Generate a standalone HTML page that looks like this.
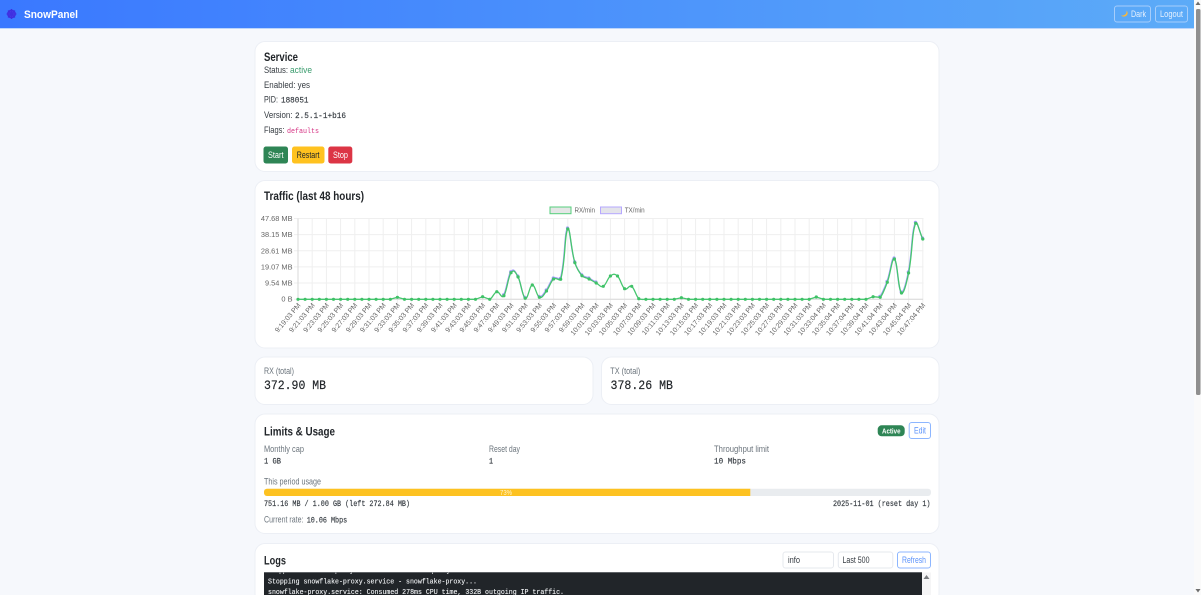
<!DOCTYPE html>
<html lang="en">
<head>
<meta charset="utf-8">
<title>SnowPanel</title>
<style>
html,body{margin:0;padding:0;width:1201px;height:595px;overflow:hidden;background:#f6f8fc}
svg{display:block;position:absolute;left:0;top:0;filter:blur(.3px)}
text{font-family:"Liberation Sans",sans-serif;font-size:9.6px;fill:#343a40}
.m{font-family:"Liberation Mono",monospace;font-size:7.8px;fill:#343a40;stroke:#343a40;stroke-width:.15px}
.h{font-size:12px;font-weight:bold;fill:#212529}
.g{fill:#6c757d;font-size:8.8px}
.c{fill:#666;font-size:7.4px}
.x{fill:#666;font-size:7px;text-anchor:end}
.y{fill:#666;font-size:7.4px;text-anchor:end}
.card{fill:#fff;stroke:#eceff5;stroke-width:1}
.b{font-size:8.8px;fill:#fff}
.l{font-family:"Liberation Mono",monospace;font-size:7.4px;fill:#f1f3f5;stroke:#f1f3f5;stroke-width:.12px}
</style>
</head>
<body>
<svg width="1201" height="595" viewBox="0 0 1201 595" xmlns="http://www.w3.org/2000/svg">
<defs>
<linearGradient id="nav" x1="0" x2="1" y1="0" y2="0"><stop offset="0" stop-color="#3a78ff"/><stop offset="1" stop-color="#5cabf8"/></linearGradient>
<marker id="dg" markerWidth="4" markerHeight="4" refX="2" refY="2" markerUnits="userSpaceOnUse"><circle cx="2" cy="2" r="1.6" fill="#3fc167"/></marker>
<marker id="dp" markerWidth="4" markerHeight="4" refX="2" refY="2" markerUnits="userSpaceOnUse"><circle cx="2" cy="2" r="1.6" fill="#a99bff"/></marker>
<clipPath id="con"><rect x="264" y="572.5" width="658" height="23"/></clipPath>
</defs>

<!-- navbar -->
<rect x="0" y="0" width="1194" height="28" fill="url(#nav)"/>
<rect x="0" y="28" width="1194" height="1" fill="#bcd5fb"/>
<g stroke="#3f2fe0" stroke-width="1.3" fill="#4a38e6">
<circle cx="11.5" cy="14" r="3.8"/>
<path d="M11.5 9v10M6.5 14h10M8 10.500l7 7M15 10.500l-7 7" stroke-width="1.100"/>
</g>
<text x="24" y="18" textLength="54" lengthAdjust="spacingAndGlyphs" style="font-size:10.8px;font-weight:bold;fill:#fff">SnowPanel</text>
<rect x="1114.500" y="6" width="36" height="16" rx="2.500" fill="none" stroke="#a6cdfb"/>
<path d="M1126.500 10.500c.6 3-1.800 5.400-5.500 5 1.800 1.900 5.600 1.300 6.500-1.400.4-1.300 0-2.600-1-3.600z" fill="#f6b73c"/>
<text x="1131" y="17" textLength="15" lengthAdjust="spacingAndGlyphs" class="b" style="fill:#e6f1fe">Dark</text>
<rect x="1155.500" y="6" width="32" height="16" rx="2.500" fill="none" stroke="#a6cdfb"/>
<text x="1160" y="17" textLength="23" lengthAdjust="spacingAndGlyphs" class="b" style="fill:#e6f1fe">Logout</text>

<!-- page scrollbar -->
<rect x="1194" y="0" width="7" height="595" fill="#fafafa"/>
<rect x="1196" y="9" width="4.500" height="386" rx="1.500" fill="#8f8f8f"/>
<path d="M1198 1.500l2.500 3.500h-5zM1198 592.500l2.500-3.500h-5z" fill="#6e6e6e"/>

<!-- service -->
<rect class="card" x="255" y="41.500" width="684" height="130" rx="10"/>
<text class="h" x="264" y="61" textLength="34" lengthAdjust="spacingAndGlyphs">Service</text>
<text x="264" y="72.800" textLength="24" lengthAdjust="spacingAndGlyphs">Status:</text>
<text x="290" y="72.800" textLength="22" lengthAdjust="spacingAndGlyphs" style="fill:#3b9c6e">active</text>
<text x="264" y="87.800" textLength="46" lengthAdjust="spacingAndGlyphs">Enabled: yes</text>
<text x="264" y="102.500" textLength="14" lengthAdjust="spacingAndGlyphs">PID:</text>
<text class="m" x="281" y="102.500" textLength="27.500" lengthAdjust="spacingAndGlyphs">188051</text>
<text x="264" y="118" textLength="28.500" lengthAdjust="spacingAndGlyphs">Version:</text>
<text class="m" x="295" y="118" textLength="51" lengthAdjust="spacingAndGlyphs">2.5.1-1+b16</text>
<text x="264" y="133.200" textLength="20.500" lengthAdjust="spacingAndGlyphs">Flags:</text>
<text class="m" x="287" y="133" textLength="32" lengthAdjust="spacingAndGlyphs" style="fill:#d63384;stroke:none;font-size:7.200px">defaults</text>
<rect x="263.500" y="146.500" width="24.500" height="17" rx="2.500" fill="#2e8555"/>
<text class="b" x="268" y="158" textLength="15.500" lengthAdjust="spacingAndGlyphs">Start</text>
<rect x="292" y="146.500" width="32.500" height="17" rx="2.500" fill="#ffc21f"/>
<text class="b" x="296.800" y="158" textLength="22.700" lengthAdjust="spacingAndGlyphs" style="fill:#212529">Restart</text>
<rect x="328.300" y="146.500" width="24" height="17" rx="2.500" fill="#dc3545"/>
<text class="b" x="333" y="158" textLength="15" lengthAdjust="spacingAndGlyphs">Stop</text>

<!-- traffic -->
<rect class="card" x="255" y="180.500" width="684" height="167.500" rx="10"/>
<text class="h" x="264" y="200" textLength="100" lengthAdjust="spacingAndGlyphs">Traffic (last 48 hours)</text>
<rect x="550" y="207" width="21" height="6.700" fill="#e4e6e6" stroke="#56cf7c" stroke-width="1"/>
<text class="c" x="574.500" y="212.700" textLength="20.500" lengthAdjust="spacingAndGlyphs">RX/min</text>
<rect x="600.500" y="207" width="21" height="6.700" fill="#e4e4ea" stroke="#b6a8ff" stroke-width="1"/>
<text class="c" x="624.700" y="212.700" textLength="20" lengthAdjust="spacingAndGlyphs">TX/min</text>

<g stroke="#efefef" stroke-width="1" fill="none">
<path d="M294 218.500H923.500M294 234.600H923.500M294 250.700H923.500M294 266.900H923.500M294 283H923.500M294 299.300H923.500"/>
<path d="M298 218.500V303M312.200 218.500V303M326.400 218.500V303M340.600 218.500V303M354.800 218.500V303M369 218.500V303M383.200 218.500V303M397.400 218.500V303M411.600 218.500V303M425.800 218.500V303M440 218.500V303M454.200 218.500V303M468.400 218.500V303M482.600 218.500V303M496.800 218.500V303M511 218.500V303M525.200 218.500V303M539.400 218.500V303M553.600 218.500V303M567.800 218.500V303M582 218.500V303M596.200 218.500V303M610.400 218.500V303M624.600 218.500V303M638.800 218.500V303M653 218.500V303M667.200 218.500V303M681.400 218.500V303M695.600 218.500V303M709.800 218.500V303M724 218.500V303M738.200 218.500V303M752.400 218.500V303M766.600 218.500V303M780.800 218.500V303M795 218.500V303M809.200 218.500V303M823.400 218.500V303M837.600 218.500V303M851.800 218.500V303M866 218.500V303M880.200 218.500V303M894.400 218.500V303M908.600 218.500V303M922.800 218.500V303"/>
</g>
<path d="M298 218.500V299.300H923" fill="none" stroke="#d9d9d9"/>
<text class="y" x="292.500" y="221">47.68 MB</text>
<text class="y" x="292.500" y="237">38.15 MB</text>
<text class="y" x="292.500" y="253.300">28.61 MB</text>
<text class="y" x="292.500" y="269.500">19.07 MB</text>
<text class="y" x="292.500" y="285.700">9.54 MB</text>
<text class="y" x="292.500" y="301.700">0 B</text>

<g transform="translate(-.3 -1)" fill="none" stroke="#a99bff" stroke-width="1.300" marker-start="url(#dp)" marker-mid="url(#dp)" marker-end="url(#dp)">
<path d="M503.900 295.700C506.700 291.900 508.200 276.400 511 272.700C513.800 269 515.300 271.900 518.100 277C520.900 282.100 522.400 296.700 525.200 298.300"/>
<path d="M539.400 297.300C542.200 298.500 543.700 294.700 546.500 291C549.300 287.300 550.800 281.300 553.600 279C556.400 276.700 560 281.800 560.700 279.300C565.700 261.600 564.400 233 567.800 229C570.100 226.300 570.900 249.600 574.900 262.700C576.600 268.300 578.300 271.400 582 275.700C584 278 586.300 277.500 589.100 279C591.900 280.500 593.400 281.500 596.200 283"/>
<path d="M880.200 297.300C881.500 296.500 885 288.500 887.300 282.300C890.700 273.200 892 257.200 894.400 259C897.700 261.500 898 289.500 901.500 293C903.700 295.100 906.900 281.300 908.600 273C912.600 253.400 911.500 233.400 915.700 223.300C917.200 219.800 919.900 234 922.800 239"/>
</g>
<path fill="none" stroke="#46c66e" stroke-width="1.300" stroke-linejoin="round" marker-start="url(#dg)" marker-mid="url(#dg)" marker-end="url(#dg)" d="M298 299.300L305.100 299.300L312.200 299.300L319.300 299.300L326.400 299.300L333.500 299.300L340.600 299.300L347.700 299.300L354.800 299.300L361.900 299.300L369 299.300L376.100 299.300L383.200 299.300L390.300 299.300L397.400 297.300L404.500 299.300L411.600 299.300L418.700 299.300L425.800 299.300L432.900 299.300L440 299.300L447.100 299.300L454.200 299.300L461.300 299.300L468.400 299.300L475.500 299.300L482.600 296.700L489.700 299.300C492.500 298.300 494 292.400 496.800 291.700C499.600 291 501.100 299.500 503.900 295.700C506.700 291.900 508.200 276.400 511 272.700C513.800 269 515.300 271.900 518.100 277C520.900 282.100 522.400 296.700 525.200 298.300C528 299.900 529.500 285.200 532.300 285C535.100 284.800 536.600 296.100 539.400 297.300C542.200 298.500 543.700 294.700 546.500 291C549.300 287.300 550.800 281.300 553.600 279C556.400 276.700 560 281.800 560.700 279.300C565.700 261.600 564.400 233 567.800 229C570.100 226.300 570.900 249.600 574.900 262.700C576.600 268.300 578.300 271.400 582 275.700C584 278 586.300 277.500 589.100 279C591.900 280.500 593.400 281.500 596.200 283C599 284.500 600.500 287.700 603.300 286.300C606.100 284.900 607.600 278.100 610.400 276C613.200 273.900 614.700 273.500 617.500 276C620.300 278.500 621.800 286.600 624.600 288.700C627.400 290.800 628.900 284.300 631.700 286.300C634.500 288.300 636 296.100 638.800 298.700C641.600 299.900 643 299.300 645.900 299.300L653 299.300L660.100 299.300L667.200 299.300L674.300 299.300L681.400 297.700L688.500 299.300L695.600 299.300L702.700 299.300L709.800 299.300L716.900 299.300L724 299.300L731.100 299.300L738.200 299.300L745.300 299.300L752.400 299.300L759.500 299.300L766.600 299.300L773.700 299.300L780.800 299.300L787.900 299.300L795 299.300L802.100 299.300L809.200 299.300L816.300 297L823.400 299.300L830.500 299.300L837.600 299.300L844.700 299.300L851.800 299.300L858.900 299.300L866 299.300L873.100 296.700L880.200 297.300C881.500 296.500 885 288.500 887.300 282.300C890.700 273.200 892 257.200 894.400 259C897.700 261.500 898 289.500 901.500 293C903.700 295.100 906.900 281.300 908.600 273C912.600 253.400 911.500 233.400 915.700 223.300C917.200 219.800 919.900 234 922.800 239"/>

<g class="ticks" transform="translate(1.500 .5)">
<text class="x" transform="translate(299.500 305) rotate(-50)">9:19:03 PM</text>
<text class="x" transform="translate(313.700 305) rotate(-50)">9:21:03 PM</text>
<text class="x" transform="translate(327.900 305) rotate(-50)">9:23:03 PM</text>
<text class="x" transform="translate(342.100 305) rotate(-50)">9:25:03 PM</text>
<text class="x" transform="translate(356.300 305) rotate(-50)">9:27:03 PM</text>
<text class="x" transform="translate(370.500 305) rotate(-50)">9:29:03 PM</text>
<text class="x" transform="translate(384.700 305) rotate(-50)">9:31:03 PM</text>
<text class="x" transform="translate(398.900 305) rotate(-50)">9:33:03 PM</text>
<text class="x" transform="translate(413.100 305) rotate(-50)">9:35:03 PM</text>
<text class="x" transform="translate(427.300 305) rotate(-50)">9:37:03 PM</text>
<text class="x" transform="translate(441.500 305) rotate(-50)">9:39:03 PM</text>
<text class="x" transform="translate(455.700 305) rotate(-50)">9:41:03 PM</text>
<text class="x" transform="translate(469.900 305) rotate(-50)">9:43:03 PM</text>
<text class="x" transform="translate(484.100 305) rotate(-50)">9:45:03 PM</text>
<text class="x" transform="translate(498.300 305) rotate(-50)">9:47:03 PM</text>
<text class="x" transform="translate(512.500 305) rotate(-50)">9:49:03 PM</text>
<text class="x" transform="translate(526.700 305) rotate(-50)">9:51:03 PM</text>
<text class="x" transform="translate(540.900 305) rotate(-50)">9:53:03 PM</text>
<text class="x" transform="translate(555.100 305) rotate(-50)">9:55:03 PM</text>
<text class="x" transform="translate(569.300 305) rotate(-50)">9:57:03 PM</text>
<text class="x" transform="translate(583.500 305) rotate(-50)">9:59:03 PM</text>
<text class="x" transform="translate(597.700 305) rotate(-50)">10:01:03 PM</text>
<text class="x" transform="translate(611.900 305) rotate(-50)">10:03:03 PM</text>
<text class="x" transform="translate(626.100 305) rotate(-50)">10:05:03 PM</text>
<text class="x" transform="translate(640.300 305) rotate(-50)">10:07:03 PM</text>
<text class="x" transform="translate(654.500 305) rotate(-50)">10:09:03 PM</text>
<text class="x" transform="translate(668.700 305) rotate(-50)">10:11:03 PM</text>
<text class="x" transform="translate(682.900 305) rotate(-50)">10:13:03 PM</text>
<text class="x" transform="translate(697.100 305) rotate(-50)">10:15:03 PM</text>
<text class="x" transform="translate(711.300 305) rotate(-50)">10:17:03 PM</text>
<text class="x" transform="translate(725.500 305) rotate(-50)">10:19:03 PM</text>
<text class="x" transform="translate(739.700 305) rotate(-50)">10:21:03 PM</text>
<text class="x" transform="translate(753.900 305) rotate(-50)">10:23:03 PM</text>
<text class="x" transform="translate(768.100 305) rotate(-50)">10:25:03 PM</text>
<text class="x" transform="translate(782.300 305) rotate(-50)">10:27:03 PM</text>
<text class="x" transform="translate(796.500 305) rotate(-50)">10:29:03 PM</text>
<text class="x" transform="translate(810.700 305) rotate(-50)">10:31:03 PM</text>
<text class="x" transform="translate(824.900 305) rotate(-50)">10:33:04 PM</text>
<text class="x" transform="translate(839.100 305) rotate(-50)">10:35:04 PM</text>
<text class="x" transform="translate(853.300 305) rotate(-50)">10:37:04 PM</text>
<text class="x" transform="translate(867.500 305) rotate(-50)">10:39:04 PM</text>
<text class="x" transform="translate(881.700 305) rotate(-50)">10:41:04 PM</text>
<text class="x" transform="translate(895.900 305) rotate(-50)">10:43:04 PM</text>
<text class="x" transform="translate(910.100 305) rotate(-50)">10:45:04 PM</text>
<text class="x" transform="translate(924.300 305) rotate(-50)">10:47:04 PM</text>
</g>

<!-- totals -->
<rect class="card" x="255" y="357" width="338" height="47.500" rx="10"/>
<text class="g" x="264" y="374" textLength="30" lengthAdjust="spacingAndGlyphs">RX (total)</text>
<text class="m" x="264" y="389" textLength="62" lengthAdjust="spacingAndGlyphs" style="font-size:12.500px;fill:#212529;stroke:#212529">372.90 MB</text>
<rect class="card" x="601.500" y="357" width="337.500" height="47.500" rx="10"/>
<text class="g" x="610.300" y="374" textLength="30" lengthAdjust="spacingAndGlyphs">TX (total)</text>
<text class="m" x="610.500" y="389" textLength="62.500" lengthAdjust="spacingAndGlyphs" style="font-size:12.500px;fill:#212529;stroke:#212529">378.26 MB</text>

<!-- limits -->
<rect class="card" x="255" y="414" width="684" height="119.500" rx="10"/>
<text class="h" x="264" y="435.500" textLength="71" lengthAdjust="spacingAndGlyphs">Limits &amp; Usage</text>
<rect x="877.700" y="425.300" width="27" height="11" rx="4" fill="#2e8555"/>
<text class="b" x="882" y="433.500" textLength="18.500" lengthAdjust="spacingAndGlyphs" style="font-size:7.400px;font-weight:bold">Active</text>
<rect x="909.200" y="422.500" width="21.300" height="16" rx="2.500" fill="#fff" stroke="#8db6ff"/>
<text class="b" x="914" y="433.700" textLength="12" lengthAdjust="spacingAndGlyphs" style="fill:#5c93fb">Edit</text>
<text class="g" x="264" y="452" textLength="40" lengthAdjust="spacingAndGlyphs">Monthly cap</text>
<text class="g" x="489" y="452" textLength="31" lengthAdjust="spacingAndGlyphs">Reset day</text>
<text class="g" x="714" y="452" textLength="55" lengthAdjust="spacingAndGlyphs">Throughput limit</text>
<text class="m" x="264" y="463.700" textLength="17" lengthAdjust="spacingAndGlyphs">1 GB</text>
<text class="m" x="489" y="463.700" textLength="4" lengthAdjust="spacingAndGlyphs">1</text>
<text class="m" x="714" y="463.700" textLength="32" lengthAdjust="spacingAndGlyphs">10 Mbps</text>
<text class="g" x="264" y="484.500" textLength="57" lengthAdjust="spacingAndGlyphs">This period usage</text>
<rect x="264" y="488.800" width="667" height="7.200" rx="3" fill="#e9ecef"/>
<path d="M267 488.800H750.300V496H267a3 3 0 0 1-3-3v-1.200a3 3 0 0 1 3-3z" fill="#fdc221"/>
<text x="500" y="495" textLength="12" lengthAdjust="spacingAndGlyphs" style="font-size:7px;fill:#fff3cf">73%</text>
<text class="m" x="264" y="506" textLength="146" lengthAdjust="spacingAndGlyphs">751.16 MB / 1.00 GB (left 272.84 MB)</text>
<text class="m" x="833" y="506" textLength="97.500" lengthAdjust="spacingAndGlyphs">2025-11-01 (reset day 1)</text>
<text class="g" x="264" y="522.500" textLength="39.500" lengthAdjust="spacingAndGlyphs">Current rate:</text>
<text class="m" x="306.700" y="522.500" textLength="40.500" lengthAdjust="spacingAndGlyphs">10.06 Mbps</text>

<!-- logs -->
<rect class="card" x="255" y="543.500" width="684" height="60" rx="10"/>
<text class="h" x="264" y="564.500" textLength="22" lengthAdjust="spacingAndGlyphs">Logs</text>
<rect x="783" y="552" width="50.500" height="16" rx="2.500" fill="#fff" stroke="#e6e9ee"/>
<text x="788" y="563" textLength="12" lengthAdjust="spacingAndGlyphs" style="font-size:9px">info</text>
<rect x="838.300" y="552" width="54.500" height="16" rx="2.500" fill="#fff" stroke="#e6e9ee"/>
<text x="842.500" y="563" textLength="27" lengthAdjust="spacingAndGlyphs" style="font-size:9px">Last 500</text>
<rect x="897.500" y="552" width="33" height="16" rx="2.500" fill="#fff" stroke="#8db6ff"/>
<text class="b" x="902" y="563" textLength="24" lengthAdjust="spacingAndGlyphs" style="fill:#5c93fb">Refresh</text>
<rect x="264" y="572.500" width="658" height="23" fill="#212529"/>
<rect x="264" y="572" width="658" height=".8" fill="#6d7175"/>
<g clip-path="url(#con)">
<text class="l" x="268" y="572.300" textLength="186" lengthAdjust="spacingAndGlyphs">Stopped snowflake-proxy.service - snowflake-proxy.</text>
<text class="l" x="268" y="583.500" textLength="209" lengthAdjust="spacingAndGlyphs">Stopping snowflake-proxy.service - snowflake-proxy...</text>
<text class="l" x="268" y="594" textLength="296" lengthAdjust="spacingAndGlyphs">snowflake-proxy.service: Consumed 278ms CPU time, 332B outgoing IP traffic.</text>
</g>
<rect x="922" y="572.500" width="9" height="23" fill="#f5f5f6"/>
<path d="M926.500 575l3 4h-6z" fill="#7a7d80"/>
</svg>
</body>
</html>
